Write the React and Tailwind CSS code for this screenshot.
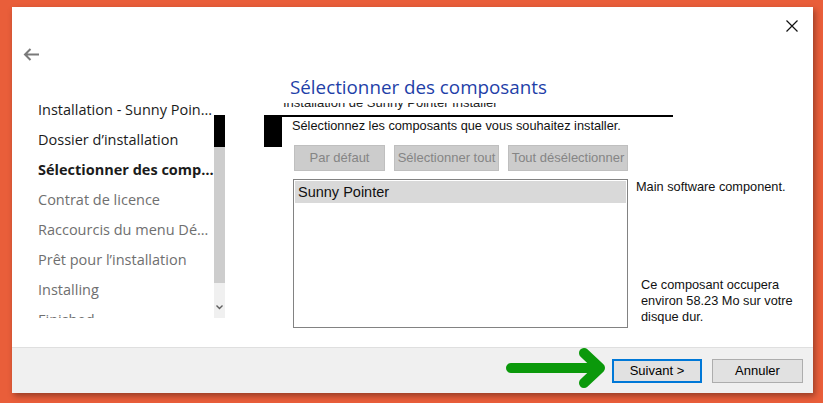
import React from "react";

const steps = [
  { label: "Installation - Sunny Pointer Installer", done: true },
  { label: "Dossier d’installation", done: true },
  { label: "Sélectionner des composants", done: true, current: true },
  { label: "Contrat de licence" },
  { label: "Raccourcis du menu Démarrer" },
  { label: "Prêt pour l’installation" },
  { label: "Installing" },
  { label: "Finished" },
];

const sans = { fontFamily: '"Liberation Sans", Arial, sans-serif' };

const BackArrow = () => (
  <svg width="17" height="13" viewBox="0 0 17 13" fill="none">
    <path d="M16 6.5H2M7.5 1L2 6.5L7.5 12" stroke="#7a7a7a" strokeWidth="2" />
  </svg>
);

const CloseIcon = () => (
  <svg width="12" height="12" viewBox="0 0 12 12" fill="none">
    <path d="M0.5 0.5L11.5 11.5M11.5 0.5L0.5 11.5" stroke="#111" strokeWidth="1.2" />
  </svg>
);

const GreenArrow = () => (
  <svg width="110" height="44" viewBox="0 0 110 44" fill="none" className="absolute left-[488px] top-0">
    <path d="M11 20H98M84 5L100 20L84 35" stroke="#0b990b" strokeWidth="10" strokeLinecap="round" strokeLinejoin="round" />
  </svg>
);

const Sidebar = () => (
  <div className="w-[252px] flex flex-col">
    <div className="ml-[11px] mt-[41px] h-[13px]">
      <BackArrow />
    </div>
    <div className="mt-[34px] h-[223px] flex">
      <div className="pl-[26px] w-[202px] overflow-hidden">
        {steps.map((s) => (
          <div
            key={s.label}
            className={`h-[30px] leading-[30px] text-[14.5px] truncate ${s.current ? "font-bold" : ""} ${s.done ? "text-[#1b1b1b]" : "text-[#6f6f6f]"}`}
            style={{ fontFamily: '"Open Sans", "Noto Sans", sans-serif' }}
          >
            {s.label}
          </div>
        ))}
      </div>
      <div className="w-[11px] flex flex-col">
        <div className="h-[20px]" />
        <div className="h-[32px] bg-black" />
        <div className="h-[136px] bg-[#cdcdcd]" />
        <div className="h-[35px] bg-[#f0f0f0] flex items-end justify-center pb-[8px]">
          <svg width="7" height="5" viewBox="0 0 7 5" fill="none">
            <path d="M0.5 0.5L3.5 3.5L6.5 0.5" stroke="#606060" strokeWidth="1.4" />
          </svg>
        </div>
      </div>
    </div>
  </div>
);

const GrayButton = ({ children, w }) => (
  <div className={`${w} h-[26px] bg-[#cccccc] border border-[#bfbfbf] text-[#858585] text-[13px] flex items-center justify-center`}>
    {children}
  </div>
);

const ComponentsPage = () => (
  <div className="flex-1 flex flex-col" style={sans}>
    <div
      className="pl-[26px] mt-[66px] h-[30px] leading-[28px] text-[18.8px] text-[#1f3fa8]"
      style={{ fontFamily: '"Open Sans", "Noto Sans", sans-serif' }}
    >
      Sélectionner des composants
    </div>
    <div className="pl-[19px] h-[8px] overflow-hidden">
      <div className="-mt-[8px] leading-[16px] text-[13px] text-[#222]">
        Installation de Sunny Pointer Installer
      </div>
    </div>
    <div className="mt-[4px] flex">
      <div className="w-[18px] h-[32px] bg-black" />
      <div className="w-[391px] border-t-2 border-black">
        <div className="pl-[10px] pt-[1px] leading-[16px] text-[12.75px] text-[#111]">
          Sélectionnez les composants que vous souhaitez installer.
        </div>
      </div>
    </div>
    <div className="-mt-[2px] ml-[30px] flex gap-[9px]">
      <GrayButton w="w-[91px]">Par défaut</GrayButton>
      <GrayButton w="w-[105px]">Sélectionner tout</GrayButton>
      <GrayButton w="w-[120px]">Tout désélectionner</GrayButton>
    </div>
    <div className="mt-[8px] ml-[29px] flex">
      <div className="w-[335px] h-[149px] border border-[#828282] p-px">
        <div className="h-[22px] bg-[#d9d9d9] pl-[3px] leading-[22px] text-[14.5px] text-[#111]">
          Sunny Pointer
        </div>
      </div>
      <div className="ml-[8px] flex flex-col justify-between text-[12.75px] leading-[16px] text-[#111]">
        <div>Main software component.</div>
        <div className="pl-[5px] pb-[3px]">
          Ce composant occupera
          <br />
          environ 58.23 Mo sur votre
          <br />
          disque dur.
        </div>
      </div>
    </div>
  </div>
);

export default function App() {
  return (
    <div className="w-[823px] h-[403px] bg-[#e95e3a] pt-[7px] pl-[12px] overflow-hidden">
      <div className="relative w-[801px] h-[386px] bg-white flex flex-col shadow-[2px_3px_6px_rgba(0,0,0,0.35)]">
        <div className="absolute right-[15px] top-[13px]">
          <CloseIcon />
        </div>
        <div className="flex-1 flex">
          <Sidebar />
          <ComponentsPage />
        </div>
        <div className="relative h-[46px] border-t border-[#dfdfdf] bg-[#f0f0f0] flex items-center justify-end gap-[10px] pr-[10px]" style={sans}>
          <GreenArrow />
          <div className="w-[90px] h-[24px] bg-[#e1e1e1] border-2 border-[#0078d7] text-[13px] text-black flex items-center justify-center">
            Suivant &gt;
          </div>
          <div className="w-[91px] h-[24px] bg-[#e1e1e1] border border-[#adadad] text-[13px] text-black flex items-center justify-center">
            Annuler
          </div>
        </div>
      </div>
    </div>
  );
}
